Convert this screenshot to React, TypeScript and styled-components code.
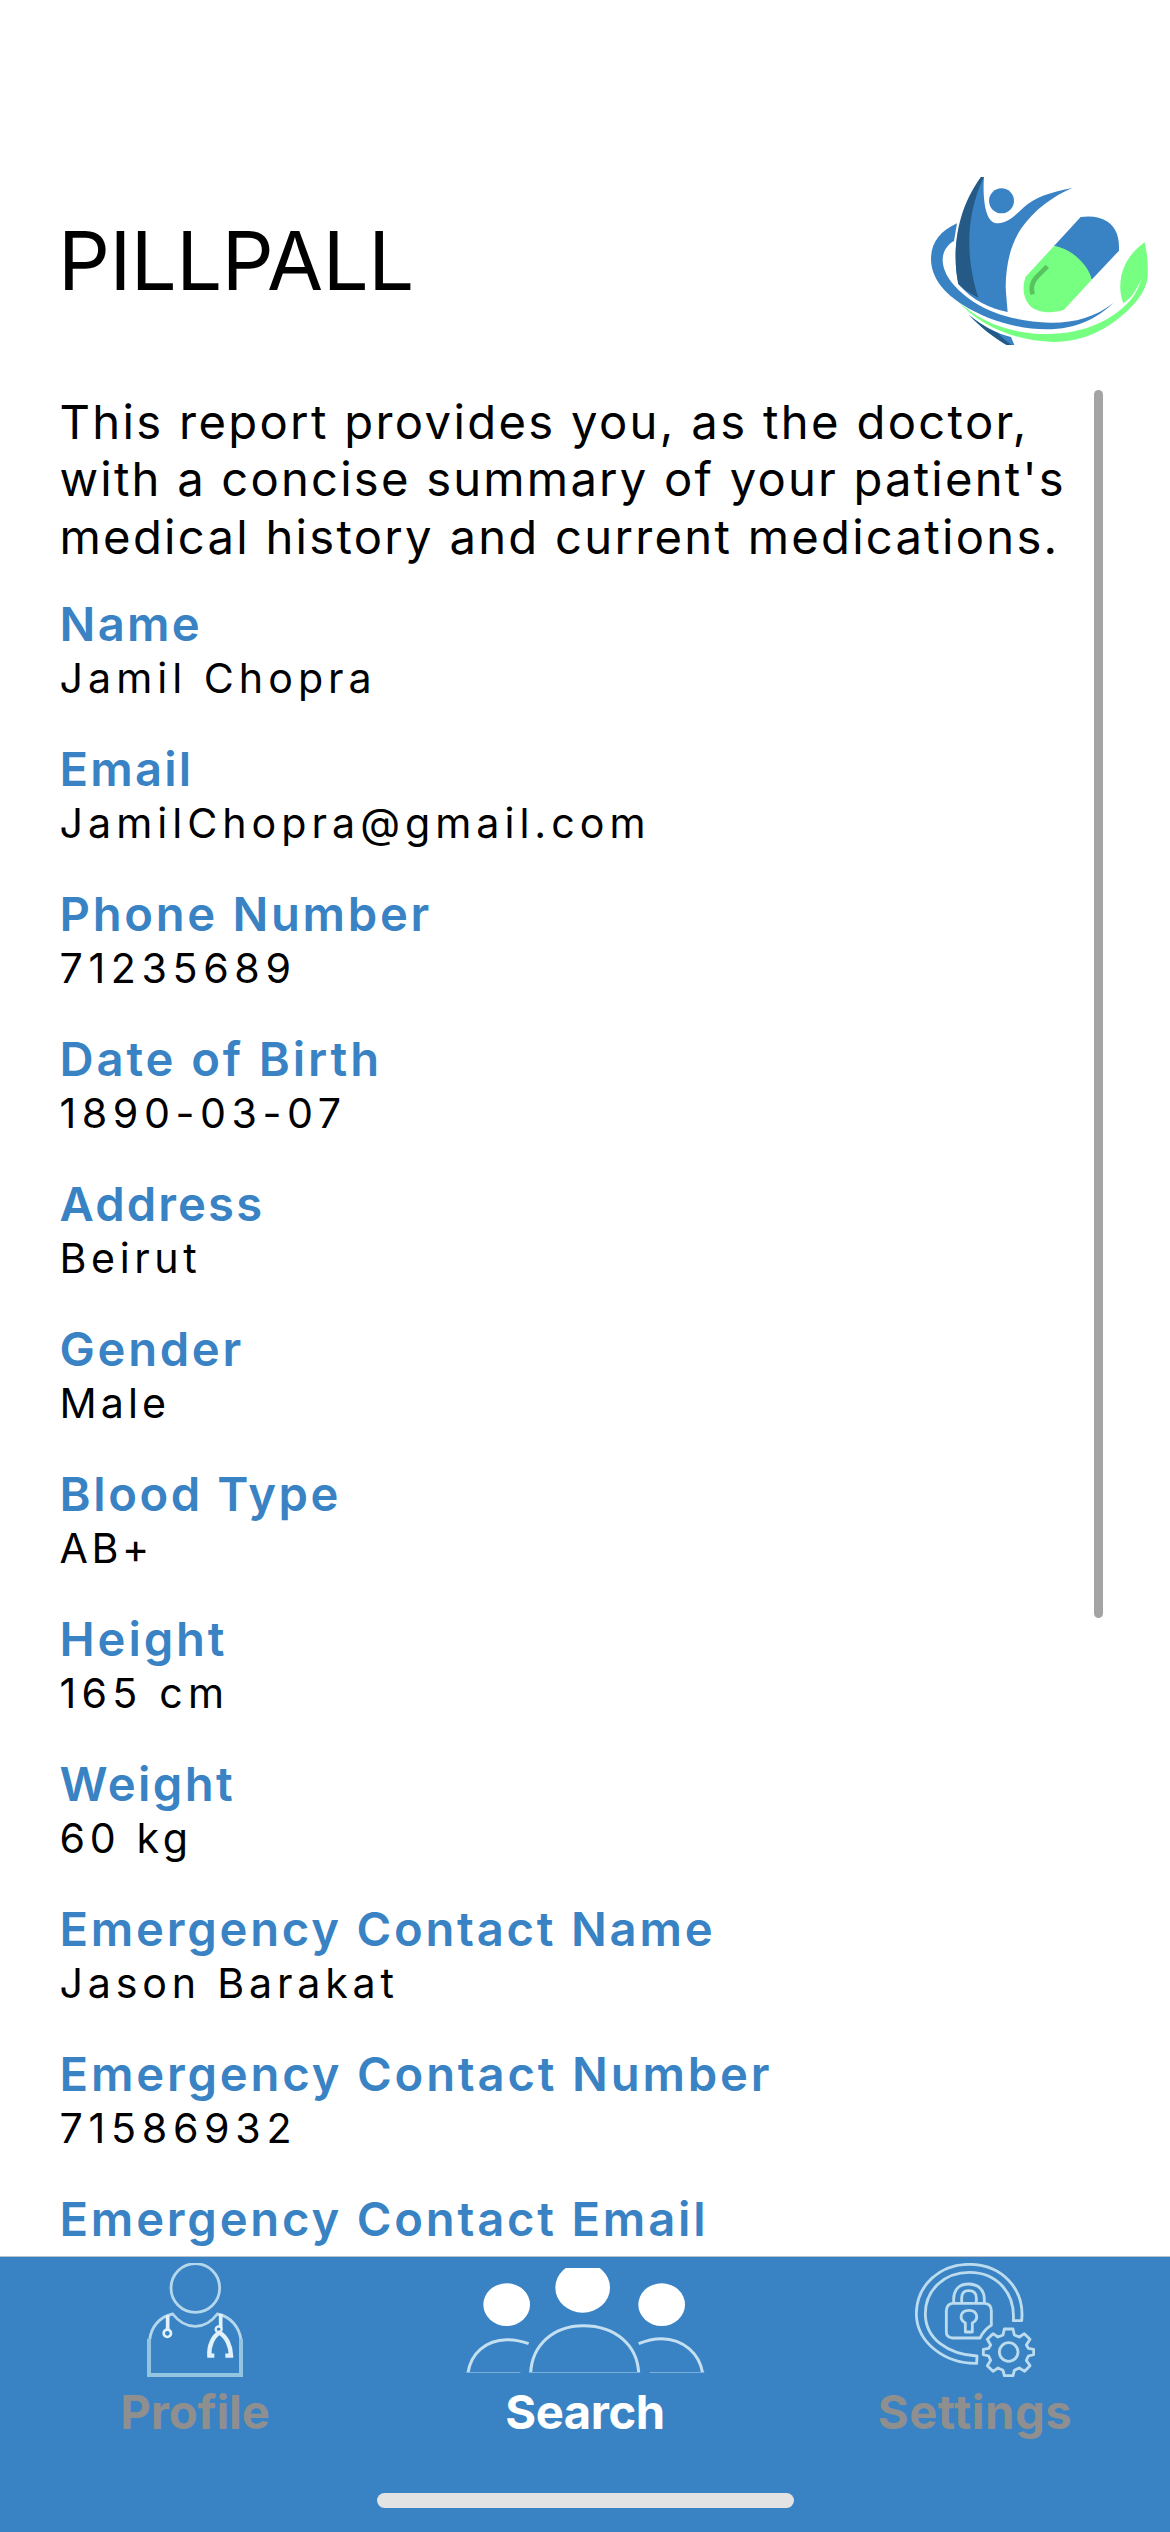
import React from "react";
import styled, { createGlobalStyle } from "styled-components";

const BLUE = "#3983c4";
const GREEN = "#76ff81";
const NAVY = "#255a87";

const GlobalStyle = createGlobalStyle`
  * { box-sizing: border-box; }
  body {
    margin: 0;
    background: #fff;
    color: #000;
    font-family: Inter, "Liberation Sans", sans-serif;
  }
`;

const Screen = styled.div`
  display: flex;
  flex-direction: column;
  width: 1170px;
  height: 2532px;
  overflow: hidden;
  background: #fff;
`;

const Header = styled.header`
  display: flex;
  flex: none;
  justify-content: space-between;
  align-items: flex-start;
  height: 390px;
  padding: 177px 22px 0 58px;
`;

const Title = styled.h1`
  margin: 34px 0 0;
  font-size: 81.4px;
  line-height: 100px;
  font-weight: 400;
  letter-spacing: -0.55px;
  white-space: nowrap;
`;

const Body = styled.main`
  display: flex;
  flex: 1;
  min-height: 0;
  justify-content: space-between;
  padding: 0 67px 0 59.5px;
  overflow: hidden;
`;

const Report = styled.div`
  padding-top: 3px;
`;

const IntroLine = styled.div<{ $spacing: number }>`
  height: 57.3px;
  font-size: 47.2px;
  line-height: 57.3px;
  letter-spacing: ${(p) => p.$spacing}px;
  white-space: nowrap;
`;

const Fields = styled.dl`
  display: flex;
  flex-direction: column;
  gap: 37px;
  margin: 30.1px 0 0;
`;

const Field = styled.div`
  display: flex;
  flex: none;
  flex-direction: column;
  height: 108px;
`;

const Label = styled.dt<{ $spacing: number }>`
  height: 57px;
  font-size: 47.2px;
  line-height: 57px;
  font-weight: 600;
  letter-spacing: ${(p) => p.$spacing}px;
  color: ${BLUE};
  white-space: nowrap;
`;

const Value = styled.dd<{ $spacing: number }>`
  margin: 0;
  height: 51px;
  font-size: 41.2px;
  line-height: 52px;
  letter-spacing: ${(p) => p.$spacing}px;
  white-space: nowrap;
`;

const ScrollThumb = styled.div`
  flex: none;
  width: 9px;
  height: 1228px;
  border-radius: 5px;
  background: #a4a4a4;
`;

const BottomBar = styled.footer`
  display: flex;
  flex: none;
  flex-direction: column;
  align-items: center;
  justify-content: space-between;
  height: 276px;
  padding-bottom: 24px;
  border-top: 1px solid #b9c3cc;
  background: ${BLUE};
`;

const Tabs = styled.nav`
  display: grid;
  grid-template-columns: repeat(3, 390px);
`;

const Tab = styled.div`
  display: flex;
  flex-direction: column;
  align-items: center;
`;

const TabIcon = styled.div`
  display: flex;
  align-items: center;
  justify-content: center;
  height: 126px;
`;

const TabLabel = styled.span<{ $active?: boolean; $spacing: number }>`
  font-size: 47.2px;
  line-height: 58px;
  font-weight: 650;
  letter-spacing: ${(p) => p.$spacing}px;
  color: ${(p) => (p.$active ? "#fff" : "#8f8f8f")};
`;

const GroupSvg = styled.svg`
  margin-top: 1px;
`;

const HomeIndicator = styled.div`
  width: 417px;
  height: 15px;
  border-radius: 8px;
  background: #e3e3e3;
`;

const Logo = () => (
  <svg width="217" height="168" viewBox="63 51 651 504">
    <path fill={BLUE} d="M141 190C88 214 63 250 63 298C63 356 108 404 158 434C228 478 320 508 410 508C500 508 562 474 610 429C556 472 492 489 420 488C330 486 246 462 190 425C140 391 98 346 98 299C98 275 111 255 132 243Z" />
    <path fill={BLUE} d="M213 51H222C219 84 221 130 230 158C237 180 248 190 264 190C294 188 316 166 340 143C374 111 425 96 487 84C430 108 372 150 334 205C302 252 288 312 287 380C288 405 291 430 293 456C240 445 190 424 145 372C128 290 132 180 213 51Z" />
    <path fill={NAVY} d="M213 51H221C190 120 178 180 178 248C178 310 190 366 205 413C182 402 163 390 145 372C128 290 132 160 213 51Z" />
    <circle cx="274.500" cy="122.500" r="37.500" fill={BLUE} />
    <path fill={BLUE} d="M432 258L512 171C570 163 608 185 621 222C627 240 627 256 627 272L545 359C530 315 480 268 432 258Z" />
    <path fill={GREEN} d="M432 258C480 264 535 312 545 359L462 449C435 459 390 462 363 440C342 422 334 386 347 350Z" />
    <path fill="none" stroke="#57c45f" strokeWidth="14" d="M412 319L379 352Q359 374 368 403" />
    <path fill={GREEN} d="M704 247C714 290 714 330 713 352C708 390 684 422 655 450C594 507 524 545 430 546C318 543 212 500 142 422C210 485 300 522 410 522C530 522 610 476 658 424C677 402 688 380 693 356C681 389 664 414 640 430C626 395 628 350 645 315C659 286 680 264 704 247Z" />
    <path fill={BLUE} d="M176 464C220 500 260 520 303 531L313 555H290C250 532 212 501 176 464Z" />
    <path fill={NAVY} d="M176 464C208 491 238 507 264 519C275 532 290 544 305 555H290C250 532 212 501 176 464Z" />
  </svg>
);

const ProfileIcon = () => (
  <svg width="96" height="114" viewBox="141 69 288 342" fill="none">
    <g stroke="#b5d7ec" strokeWidth="8.500">
      <circle cx="286" cy="144" r="73" />
      <path d="M149 300C153 262 178 230 218 222C236 245 258 259 286 259C312 259 334 246 352 222C393 230 418 262 423 300" />
    </g>
    <path stroke="#93c4e2" strokeWidth="12" d="M147 296V405H423V296" />
    <g stroke="#e2f1fa">
      <path strokeWidth="11" d="M203 226V268" />
      <circle cx="202" cy="280" r="11" strokeWidth="8" />
      <path strokeWidth="11" d="M362 222V264" />
      <circle cx="356" cy="268" r="9" strokeWidth="7" />
      <path strokeWidth="13" d="M343 347H328C326 318 338 290 358 278C380 290 392 318 393 347H376" />
    </g>
  </svg>
);

const SearchIcon = () => (
  <GroupSvg width="240" height="105" viewBox="45 84 720 315" fill="none">
    <g fill="#fff">
      <ellipse cx="170" cy="194" rx="70" ry="64" />
      <ellipse cx="398" cy="143" rx="82" ry="75" />
      <ellipse cx="635" cy="194" rx="70" ry="64" />
    </g>
    <g stroke="#c3dff0" strokeWidth="9">
      <path d="M54 399C62 340 108 300 170 299Q205 299 236 311" />
      <path d="M242 399C246 315 310 257 400 257C496 257 562 315 566 399" />
      <path d="M566 311Q600 296 635 296C700 297 748 340 758 399" />
    </g>
    <path stroke="#79b0d9" strokeWidth="3" d="M48 397.500H211M238 397.500H570M599 397.500H763" />
  </GroupSvg>
);

const SettingsIcon = () => (
  <svg width="120" height="114" viewBox="165 69 360 342" fill="none" stroke="#bbdbee" strokeWidth="8.500" strokeLinejoin="round">
    <path d="M485 242C495 146 424 73 328 73C238 73 170 136 169 221C170 306 252 371 350 370L351 348C264 344 196 296 196 221C196 149 254 97 328 97C410 97 466 158 460 242Z" />
    <path d="M281 190V178C281 148 298 132 326 132C355 132 373 150 373 178V190M305 190V174C305 159 311 152 326 152C342 152 349 160 349 174V190" />
    <path d="M278 190H374Q394 192 394 212V256Q373 268 360 294H278Q258 292 259 274V212Q260 192 278 190Z" />
    <path d="M316 276V249C296 238 300 211 327 211C353 211 358 238 337 249V276Z" />
    <circle cx="446" cy="336" r="28" />
    <path d="M433 267H459L463 285L478 291L493 281L510 298L499 315L505 325L521 328V344L505 348L499 361L510 377L494 394L478 384L463 391L459 407H433L429 391L414 384L399 394L382 377L392 361L386 348L370 344V328L386 325L392 315L382 298L399 281L414 291L429 285Z" />
  </svg>
);

const intro = [
  { text: "This report provides you, as the doctor,", spacing: 2.33 },
  { text: "with a concise summary of your patient's", spacing: 2.2 },
  { text: "medical history and current medications.", spacing: 2.27 },
];

const fields = [
  { label: "Name", labelSpacing: 2.3, value: "Jamil Chopra", valueSpacing: 5 },
  { label: "Email", labelSpacing: 2.2, value: "JamilChopra@gmail.com", valueSpacing: 5 },
  { label: "Phone Number", labelSpacing: 2.7, value: "71235689", valueSpacing: 5.6 },
  { label: "Date of Birth", labelSpacing: 2.9, value: "1890-03-07", valueSpacing: 5.55 },
  { label: "Address", labelSpacing: 2.1, value: "Beirut", valueSpacing: 4.6 },
  { label: "Gender", labelSpacing: 2.7, value: "Male", valueSpacing: 4.1 },
  { label: "Blood Type", labelSpacing: 2.6, value: "AB+", valueSpacing: 3.6 },
  { label: "Height", labelSpacing: 2.9, value: "165 cm", valueSpacing: 5.2 },
  { label: "Weight", labelSpacing: 2.4, value: "60 kg", valueSpacing: 4.6 },
  { label: "Emergency Contact Name", labelSpacing: 2.77, value: "Jason Barakat", valueSpacing: 4.8 },
  { label: "Emergency Contact Number", labelSpacing: 2.83, value: "71586932", valueSpacing: 5.7 },
  { label: "Emergency Contact Email", labelSpacing: 2.8, value: "", valueSpacing: 0 },
];

const tabs = [
  { name: "Profile", Icon: ProfileIcon, spacing: -0.15 },
  { name: "Search", Icon: SearchIcon, spacing: -0.4, active: true },
  { name: "Settings", Icon: SettingsIcon, spacing: 0.5 },
];

export default function App() {
  return (
    <>
      <GlobalStyle />
      <Screen>
        <Header>
          <Title>PILLPALL</Title>
          <Logo />
        </Header>
        <Body>
          <Report>
            {intro.map((line) => (
              <IntroLine key={line.text} $spacing={line.spacing}>{line.text}</IntroLine>
            ))}
            <Fields>
              {fields.map((f) => (
                <Field key={f.label}>
                  <Label $spacing={f.labelSpacing}>{f.label}</Label>
                  <Value $spacing={f.valueSpacing}>{f.value}</Value>
                </Field>
              ))}
            </Fields>
          </Report>
          <ScrollThumb />
        </Body>
        <BottomBar>
          <Tabs>
            {tabs.map(({ name, Icon, spacing, active }) => (
              <Tab key={name}>
                <TabIcon><Icon /></TabIcon>
                <TabLabel $active={active} $spacing={spacing}>{name}</TabLabel>
              </Tab>
            ))}
          </Tabs>
          <HomeIndicator />
        </BottomBar>
      </Screen>
    </>
  );
}
